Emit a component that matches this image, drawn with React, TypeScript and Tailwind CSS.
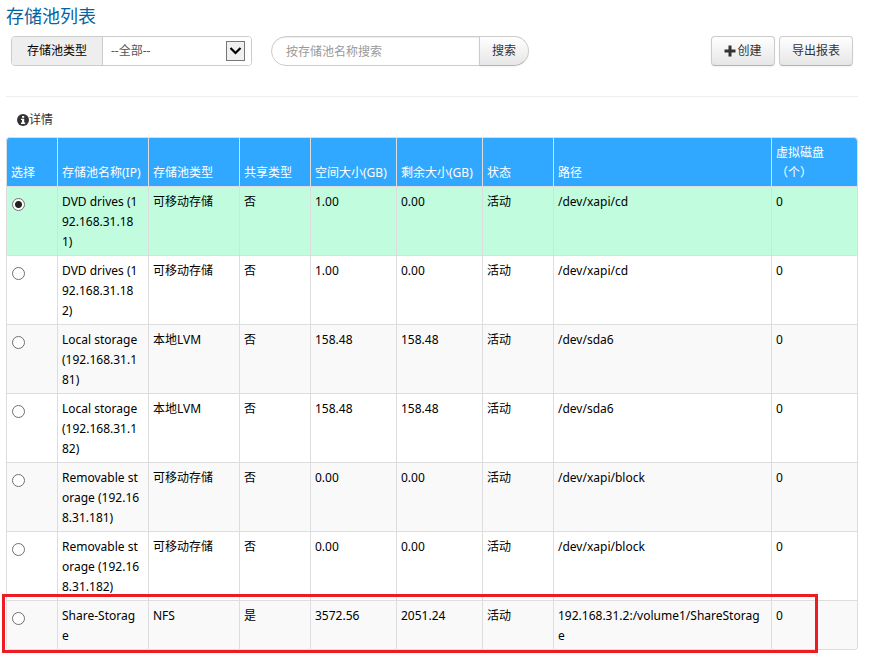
import { Fragment, useState } from "react";

type Pool = {
  name: string[];
  type: string;
  shared: string;
  total: string;
  free: string;
  state: string;
  path: string[];
  disks: number;
};

const pools: Pool[] = [
  { name: ["DVD drives (1", "92.168.31.18", "1)"], type: "可移动存储", shared: "否", total: "1.00", free: "0.00", state: "活动", path: ["/dev/xapi/cd"], disks: 0 },
  { name: ["DVD drives (1", "92.168.31.18", "2)"], type: "可移动存储", shared: "否", total: "1.00", free: "0.00", state: "活动", path: ["/dev/xapi/cd"], disks: 0 },
  { name: ["Local storage", "(192.168.31.1", "81)"], type: "本地LVM", shared: "否", total: "158.48", free: "158.48", state: "活动", path: ["/dev/sda6"], disks: 0 },
  { name: ["Local storage", "(192.168.31.1", "82)"], type: "本地LVM", shared: "否", total: "158.48", free: "158.48", state: "活动", path: ["/dev/sda6"], disks: 0 },
  { name: ["Removable st", "orage (192.16", "8.31.181)"], type: "可移动存储", shared: "否", total: "0.00", free: "0.00", state: "活动", path: ["/dev/xapi/block"], disks: 0 },
  { name: ["Removable st", "orage (192.16", "8.31.182)"], type: "可移动存储", shared: "否", total: "0.00", free: "0.00", state: "活动", path: ["/dev/xapi/block"], disks: 0 },
  { name: ["Share-Storag", "e"], type: "NFS", shared: "是", total: "3572.56", free: "2051.24", state: "活动", path: ["192.168.31.2:/volume1/ShareStorag", "e"], disks: 0 },
];

const columns = [
  { label: ["选择"], width: "w-[51px]" },
  { label: ["存储池名称(IP)"], width: "w-[91px]" },
  { label: ["存储池类型"], width: "w-[91px]" },
  { label: ["共享类型"], width: "w-[71px]" },
  { label: ["空间大小(GB)"], width: "w-[86px]" },
  { label: ["剩余大小(GB)"], width: "w-[86px]" },
  { label: ["状态"], width: "w-[71px]" },
  { label: ["路径"], width: "w-[218px]" },
  { label: ["虚拟磁盘", "（个）"], width: "w-auto" },
];

const cell = "border-t border-l border-[#ddd] px-1 pt-[5px] pb-[3px] whitespace-nowrap";
const button =
  "flex h-[30px] items-center justify-center border border-[#ccc] border-b-[#b3b3b3] bg-linear-to-b from-white to-[#e6e6e6] text-[#333] shadow-[0_1px_2px_rgba(0,0,0,0.05)]";

function Lines({ text }: { text: string[] }) {
  return (
    <>
      {text.map((line, i) => (
        <Fragment key={i}>
          {i > 0 && <br />}
          {line}
        </Fragment>
      ))}
    </>
  );
}

function Toolbar() {
  return (
    <div className="flex px-[5px]">
      <div className="flex h-[30px] w-[241px] overflow-hidden rounded border border-[#ccc]">
        <label htmlFor="pool-type" className="flex w-[90px] items-center justify-center bg-[#eee] text-black">
          存储池类型
        </label>
        <div className="relative flex-1 border-l border-[#ccc]">
          <select id="pool-type" className="h-full w-full appearance-none bg-white pl-2 text-[#555] outline-none">
            <option>--全部--</option>
          </select>
          <svg className="pointer-events-none absolute top-1 right-[6px]" width="19" height="20" viewBox="0 0 19 20">
            <rect x="0.5" y="0.5" width="18" height="19" fill="#f0f0f0" stroke="#777" />
            <path d="M4.5 7l5 5 5-5" fill="none" stroke="#000" strokeWidth="2.2" />
          </svg>
        </div>
      </div>
      <form className="ml-[19px] flex" onSubmit={(e) => e.preventDefault()}>
        <input
          type="text"
          aria-label="按存储池名称搜索"
          placeholder="按存储池名称搜索"
          className="h-[30px] w-[209px] rounded-l-full border border-[#ccc] bg-white pl-[14px] text-[#555] shadow-[inset_0_1px_1px_rgba(0,0,0,0.075)] outline-none placeholder:text-[#999]"
        />
        <button type="submit" className={`${button} -ml-px w-[50px] rounded-r-full`}>
          搜索
        </button>
      </form>
      <div className="ml-auto flex gap-1">
        <button type="button" className={`${button} w-[64px] gap-px rounded`}>
          <svg width="12" height="12" viewBox="0 0 12 12" fill="#333">
            <path d="M4.5 0.500h3v4h4v3h-4v4h-3v-4h-4v-3h4z" />
          </svg>
          创建
        </button>
        <button type="button" className={`${button} w-[74px] rounded`}>
          导出报表
        </button>
      </div>
    </div>
  );
}

function PoolTable() {
  const [selected, setSelected] = useState(0);
  return (
    <div className="relative">
      <table className="w-full table-fixed border-separate border-spacing-0 overflow-hidden rounded border-r border-b border-[#ddd] text-black">
        <thead>
          <tr className="bg-[#31a8ff] text-white">
            {columns.map((c, i) => (
              <th
                key={i}
                scope="col"
                className={`${c.width} ${cell} text-left align-bottom font-normal first:rounded-tl last:rounded-tr`}
              >
                <Lines text={c.label} />
              </th>
            ))}
          </tr>
        </thead>
        <tbody className="align-top">
          {pools.map((p, i) => (
            <tr key={i} className={i === selected ? "bg-[#c1fcde]" : i % 2 === 0 ? "bg-[#f9f9f9]" : "bg-white"}>
              <td className={cell}>
                <input
                  type="radio"
                  name="pool"
                  aria-labelledby={`pool-${i}`}
                  checked={i === selected}
                  onChange={() => setSelected(i)}
                  className="mt-[6px] ml-px block size-[13px] appearance-none rounded-full border border-[#707070] bg-white checked:bg-[radial-gradient(circle,#222_3px,#fff_4px)]"
                />
              </td>
              <td id={`pool-${i}`} className={cell}>
                <Lines text={p.name} />
              </td>
              <td className={cell}>{p.type}</td>
              <td className={cell}>{p.shared}</td>
              <td className={cell}>{p.total}</td>
              <td className={cell}>{p.free}</td>
              <td className={cell}>{p.state}</td>
              <td className={cell}>
                <Lines text={p.path} />
              </td>
              <td className={cell}>{p.disks}</td>
            </tr>
          ))}
        </tbody>
      </table>
      <div className="pointer-events-none absolute right-10 -bottom-[3px] -left-1 h-[59px] border-3 border-[#ed1c24]" />
    </div>
  );
}

export default function App() {
  return (
    <main className="bg-white pt-1 pr-[13px] pb-[9px] pl-[6px] font-['Noto_Sans','Noto_Sans_CJK_SC',sans-serif] text-xs/5 text-[#333]">
      <h1 className="mb-2 text-lg/6 text-[#0663a2]">存储池列表</h1>
      <Toolbar />
      <hr className="mt-[30px] border-[#eee]" />
      <div className="mt-[13px] mb-[7px] flex items-center pl-[11px]">
        <svg width="12" height="12" viewBox="0 0 12 12">
          <circle cx="6" cy="6" r="6" fill="#333" />
          <path d="M5 2h2.200v1.800H5zM4 4.800h3.200v3.700h1V10H4V8.500h1V6H4z" fill="#fff" />
        </svg>
        详情
      </div>
      <PoolTable />
    </main>
  );
}
